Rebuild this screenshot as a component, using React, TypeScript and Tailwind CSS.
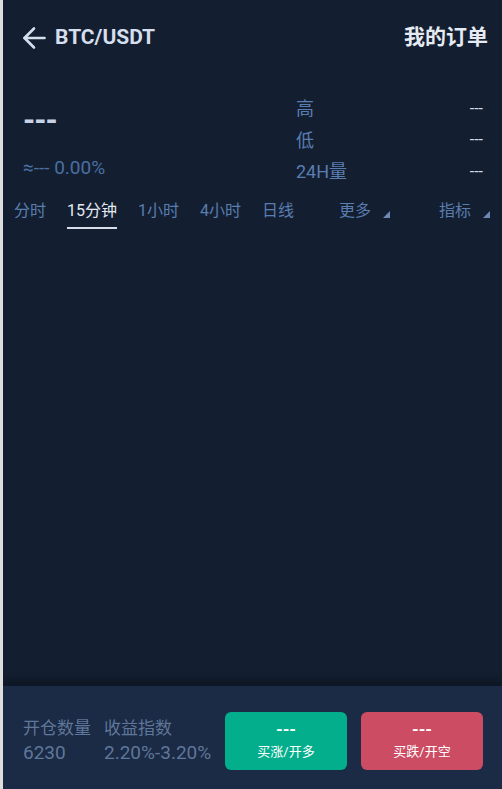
const tabs = ['分时', '15分钟', '1小时', '4小时', '日线'];

function Corner() {
  return (
    <svg width="7" height="7" viewBox="0 0 7 7" className="ml-[12px] mt-[11px]">
      <path d="M7 0 L7 7 L0 7 Z" fill="#6d88b3" />
    </svg>
  );
}

function BackArrow() {
  return (
    <svg width="24" height="24" viewBox="0 0 24 24" fill="none" stroke="#d5deed" strokeWidth="2.6" strokeLinecap="round" strokeLinejoin="round">
      <path d="M2.5 12 H22.5" />
      <path d="M12 2.5 L2.5 12 L12 21.5" />
    </svg>
  );
}

function StatRow({ label }: { label: string }) {
  return (
    <div className="flex items-center justify-between h-[31.5px]">
      <span className="text-[18px] text-[#5a7db0]">{label}</span>
      <span className="text-[16px] text-[#d3dbe8]">---</span>
    </div>
  );
}

function App() {
  return (
    <div
      className="h-[789px] w-[502px] flex flex-col bg-[#131f30] border-l-[3px] border-[#dedede] overflow-hidden"
      style={{ fontFamily: 'Roboto, "Noto Sans CJK SC", sans-serif' }}
    >
      <header className="h-[76px] flex items-center justify-between pl-[19px] pr-[14px] pb-[1px]">
        <div className="flex items-center gap-[9px]">
          <BackArrow />
          <span className="text-[21px] font-bold text-[#d5deed]">BTC/USDT</span>
        </div>
        <span className="text-[21px] font-bold text-[#e6ebf3]">我的订单</span>
      </header>

      <section className="flex pl-[20px] pr-[19px] pt-[17px]">
        <div className="flex-1 flex flex-col">
          <span className="mt-[12px] text-[31px] font-bold leading-[32px] text-[#c6d2e6] tracking-[-1px]">---</span>
          <span className="mt-[19px] text-[19px] leading-[24px] text-[#4a6fa2]">≈--- 0.00%</span>
        </div>
        <div className="w-[187px] flex flex-col">
          <StatRow label="高" />
          <StatRow label="低" />
          <StatRow label="24H量" />
        </div>
      </section>

      <nav className="flex items-start pl-[11px] pr-[12px] mt-[12px] h-[34px] text-[16px] text-[#5a7db0]">
        {tabs.map((t, i) => (
          <div key={t} className="flex flex-col items-stretch mr-[21px]">
            <span className={`leading-[22px] ${i === 1 ? 'text-[#e4e9f2]' : ''}`}>{t}</span>
            <span className={`mt-[5px] h-[2px] ${i === 1 ? 'bg-[#d7dde8]' : 'bg-transparent'}`} />
          </div>
        ))}
        <div className="flex ml-[24px]">
          <span className="leading-[22px]">更多</span>
          <Corner />
        </div>
        <div className="flex ml-auto">
          <span className="leading-[22px]">指标</span>
          <Corner />
        </div>
      </nav>

      <div className="flex-1" />

      <footer className="h-[103px] bg-[#1b2a45] shadow-[0_-6px_6px_rgba(10,16,28,0.6)] flex items-center pl-[20px] pr-[19px] pt-[6px]">
        <div className="flex flex-col">
          <span className="text-[17px] leading-[24px] text-[#5f7799]">开仓数量</span>
          <span className="text-[19px] text-[#5f7799] leading-[26px]">6230</span>
        </div>
        <div className="flex flex-col ml-[13px]">
          <span className="text-[17px] leading-[24px] text-[#5f7799]">收益指数</span>
          <span className="text-[19px] text-[#5f7799] leading-[26px]">2.20%-3.20%</span>
        </div>
        <div className="ml-auto flex gap-[14px]">
          <button className="w-[122px] h-[58px] rounded-md bg-[#03ae8c] flex flex-col items-center justify-center text-white">
            <span className="text-[17px] font-bold leading-[20px]">---</span>
            <span className="text-[13px] leading-[20px] mt-[3px]">买涨/开多</span>
          </button>
          <button className="w-[122px] h-[58px] rounded-md bg-[#cb4c63] flex flex-col items-center justify-center text-white">
            <span className="text-[17px] font-bold leading-[20px]">---</span>
            <span className="text-[13px] leading-[20px] mt-[3px]">买跌/开空</span>
          </button>
        </div>
      </footer>
    </div>
  );
}

export default App;
